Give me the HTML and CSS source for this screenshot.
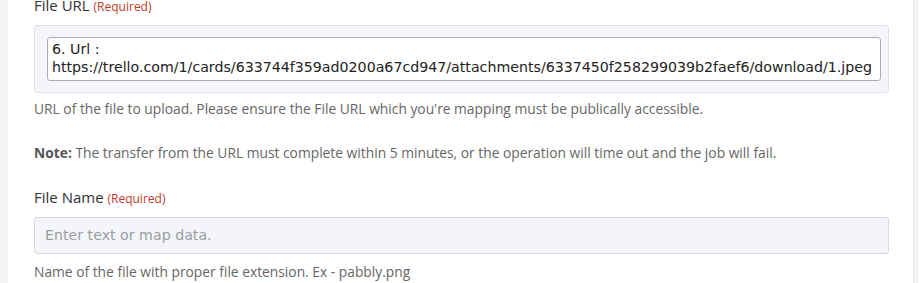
FILE: index.html
```html
<!DOCTYPE html>
<html>
<head>
<meta charset="utf-8">
<link rel="stylesheet" href="styles.css">
</head>
<body>
<div class="page">
  <div class="panel">
    <div class="field first">
      <div class="label">File URL <span class="req">(Required)</span></div>
      <div class="mapbox">
        <div class="textarea">6. Url :<br>https://trello.com/1/cards/633744f359ad0200a67cd947/attachments/6337450f258299039b2faef6/download/1.jpeg</div>
      </div>
      <p class="help">URL of the file to upload. Please ensure the File URL which you're mapping must be publically accessible.</p>
      <p class="help note"><b>Note:</b> The transfer from the URL must complete within 5 minutes, or the operation will time out and the job will fail.</p>
    </div>
    <div class="field">
      <div class="label">File Name <span class="req">(Required)</span></div>
      <div class="input">Enter text or map data.</div>
      <p class="help last">Name of the file with proper file extension. Ex - pabbly.png</p>
    </div>
  </div>
</div>
</body>
</html>
```
FILE: styles.css
```css
html, body { margin: 0; padding: 0; }
body { background: #f4f5f7; height: 283px; overflow: hidden; }
.page { display: flex; height: 283px; padding-left: 8px; }
.panel {
  background: #fff;
  width: 906px;
  border-right: 1px solid #e6e8ec;
  padding: 0 26px;
  box-sizing: border-box;
  font-family: "Open Sans", sans-serif;
}
.field.first { margin-top: -5px; }
.label { font-size: 15px; color: #333; line-height: 20px; height: 20px; }
.req { font-size: 12px; color: #c0392b; }
.mapbox {
  margin-top: 10px;
  background: #f3f5f8;
  border: 1px solid #dde1e6;
  border-radius: 3px;
  padding: 11px 7px 11px 12px;
  width: 855px;
  box-sizing: border-box;
}
.textarea {
  background: #fff;
  border: 1px solid #a9adb3;
  border-radius: 3px;
  font-family: "DejaVu Sans", sans-serif;
  font-size: 14.2px;
  line-height: 18px;
  color: #222;
  padding: 2px 4px 4px 4px;
}
.help { font-size: 13.8px; color: #666; margin: 7px 0 0 0; line-height: 18px; }
.help.note { margin-top: 26px; }
.help.last { margin-top: 9px; }
.help b { color: #555; font-weight: 700; }
.field + .field { margin-top: 25px; }
.input {
  margin-top: 10px;
  background: #f3f5f8;
  border: 1px solid #d6dadf;
  border-radius: 3px;
  height: 37px;
  width: 855px;
  box-sizing: border-box;
  font-family: "DejaVu Sans", sans-serif;
  font-size: 14.2px;
  color: #9a9da2;
  line-height: 35px;
  padding-left: 10px;
}
```
